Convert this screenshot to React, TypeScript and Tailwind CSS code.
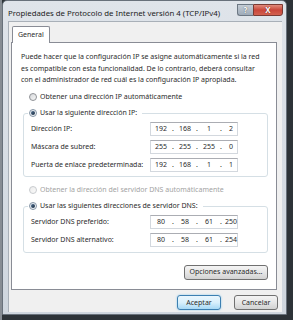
import React from "react";

function Radio({ checked, disabled }: { checked?: boolean; disabled?: boolean }) {
  if (checked) {
    return (
      <div className="w-[8px] h-[8px] rounded-full border border-[#8595a6] bg-gradient-to-br from-[#dfe6ee] to-[#fbfcfd] flex items-center justify-center shrink-0">
        <div className="w-[4px] h-[4px] rounded-full bg-gradient-to-br from-[#4f6f90] to-[#1c2e42]" />
      </div>
    );
  }
  return (
    <div
      className={
        disabled
          ? "w-[8px] h-[8px] rounded-full border border-[#c8cbce] bg-gradient-to-br from-[#ececec] to-[#fafafa] shrink-0"
          : "w-[8px] h-[8px] rounded-full border border-[#8f9296] bg-gradient-to-br from-[#d6d8db] to-[#f7f7f7] shrink-0"
      }
    />
  );
}

function IpBox({ parts }: { parts: string[] }) {
  return (
    <div className="w-[88px] h-[14px] bg-white border border-[#d3d8de] border-t-[#abadb3] grid grid-cols-[18px_6px_18px_6px_18px_6px_14px] items-center pl-[1px] leading-[12px]">
      <span className="text-center">{parts[0]}</span>
      <span className="text-center">.</span>
      <span className="text-center">{parts[1]}</span>
      <span className="text-center">.</span>
      <span className="text-center">{parts[2]}</span>
      <span className="text-center">.</span>
      <span className="text-center">{parts[3]}</span>
    </div>
  );
}

function Row({ label, parts, first }: { label: string; parts: string[]; first?: boolean }) {
  return (
    <div className={first ? "flex items-center h-[14px] mt-[3px]" : "flex items-center h-[14px] mt-[4px]"}>
      <div className="w-[126px] pl-[7px] leading-[12px] whitespace-nowrap">{label}</div>
      <IpBox parts={parts} />
    </div>
  );
}

function Btn({ children, w, primary }: { children: React.ReactNode; w: string; primary?: boolean }) {
  return (
    <div
      className={
        (primary
          ? "border-[#3c7fb1] bg-gradient-to-b from-[#eaf6fd] via-[#d9f0fc] to-[#a7d9f5] shadow-[0_0_2px_#7fc4ec] "
          : "border-[#707070] bg-gradient-to-b from-[#f4f4f4] via-[#e6e6e6] to-[#d2d2d2] ") +
        w +
        " h-[15px] border rounded-[3px] flex items-center justify-center leading-[12px] whitespace-nowrap"
      }
    >
      {children}
    </div>
  );
}

export default function App() {
  return (
    <div className="w-[293px] h-[320px] bg-[#2d3338] flex overflow-hidden font-['Noto_Sans',sans-serif] text-[7px] text-[#2b2b2b]">
      <div className="w-[2px] h-full bg-[#868c93] shrink-0" />
      <div className="w-[285px] h-[315px] shrink-0 flex flex-col bg-gradient-to-b from-[#dfe4ea] to-[#cfd6de] border border-[#68717b] rounded-t-[5px]">
        {/* title bar */}
        <div className="h-[20px] flex items-start shrink-0">
          <div className="flex-1 pl-[5px] pt-[7px] text-[7.8px] leading-[10px] text-[#1c1c1c] whitespace-nowrap">
            Propiedades de Protocolo de Internet versión 4 (TCP/IPv4)
          </div>
          <div className="flex mt-[3px] mr-[3px]">
            <div className="w-[16px] h-[12px] border border-[#6d7884] border-r-0 rounded-bl-[3px] bg-gradient-to-b from-[#c4ccd5] to-[#9eabb9] flex items-center justify-center text-white font-bold text-[8px] leading-[8px] [text-shadow:0_0_1px_#333]">
              ?
            </div>
            <div className="w-[30px] h-[12px] border border-[#7a3a33] rounded-br-[3px] bg-gradient-to-b from-[#e08a7c] via-[#c9463a] to-[#d2604f] flex items-center justify-center text-white font-bold text-[8px] leading-[8px] [text-shadow:0_0_1px_#400]">
              X
            </div>
          </div>
        </div>
        {/* client */}
        <div className="flex-1 ml-[5px] mr-[4px] mb-[2px] bg-[#f0f0f0] border-l border-t border-[#a9b0b8] pl-[2px] pr-[5px] pt-[4px] flex flex-col">
          {/* tab */}
          <div className="ml-[1px] w-[38px] h-[17px] bg-white border border-[#898c95] border-b-0 rounded-t-[2px] -mb-[1px] relative z-10 pl-[5px] pt-[2px] leading-[12px]">
            General
          </div>
          {/* panel */}
          <div className="w-[266px] h-[248px] bg-white border border-[#898c95] flex flex-col">
            <div className="pl-[9px] pt-[8px] leading-[11.5px] whitespace-nowrap">
              Puede hacer que la configuración IP se asigne automáticamente si la red
              <br />
              es compatible con esta funcionalidad. De lo contrario, deberá consultar
              <br />
              con el administrador de red cuál es la configuración IP apropiada.
            </div>
            <div className="flex items-center h-[12px] mt-[5px] ml-[17px] gap-[3px] leading-[12px]">
              <Radio />
              <span>Obtener una dirección IP automáticamente</span>
            </div>
            <div className="mt-[10px] ml-[11px] mr-[8px] border border-[#d5dfe5] rounded-[3px] pb-[4px] flex flex-col">
              <div className="-mt-[7px] ml-[4px] pl-[1px] pr-[5px] h-[12px] w-fit bg-white flex items-center gap-[3px] leading-[12px]">
                <Radio checked />
                <span>Usar la siguiente dirección IP:</span>
              </div>
              <Row first label="Dirección IP:" parts={["192", "168", "1", "2"]} />
              <Row label="Máscara de subred:" parts={["255", "255", "255", "0"]} />
              <Row label="Puerta de enlace predeterminada:" parts={["192", "168", "1", "1"]} />
            </div>
            <div className="flex items-center h-[12px] mt-[7px] ml-[17px] gap-[3px] leading-[12px] text-[#a3a3a3]">
              <Radio disabled />
              <span>Obtener la dirección del servidor DNS automáticamente</span>
            </div>
            <div className="mt-[10px] ml-[11px] mr-[8px] border border-[#d5dfe5] rounded-[3px] pb-[5px] flex flex-col">
              <div className="-mt-[7px] ml-[4px] pl-[1px] pr-[5px] h-[12px] w-fit bg-white flex items-center gap-[3px] leading-[12px]">
                <Radio checked />
                <span>Usar las siguientes direcciones de servidor DNS:</span>
              </div>
              <Row first label="Servidor DNS preferido:" parts={["80", "58", "61", "250"]} />
              <Row label="Servidor DNS alternativo:" parts={["80", "58", "61", "254"]} />
            </div>
            <div className="mt-[12px] mr-[8px] self-end">
              <Btn w="w-[84px]">Opciones avanzadas...</Btn>
            </div>
          </div>
          {/* bottom buttons */}
          <div className="mt-[5px] -mr-[1px] flex justify-end gap-[13px]">
            <Btn w="w-[44px]" primary>
              Aceptar
            </Btn>
            <Btn w="w-[44px]">Cancelar</Btn>
          </div>
        </div>
      </div>
    </div>
  );
}
